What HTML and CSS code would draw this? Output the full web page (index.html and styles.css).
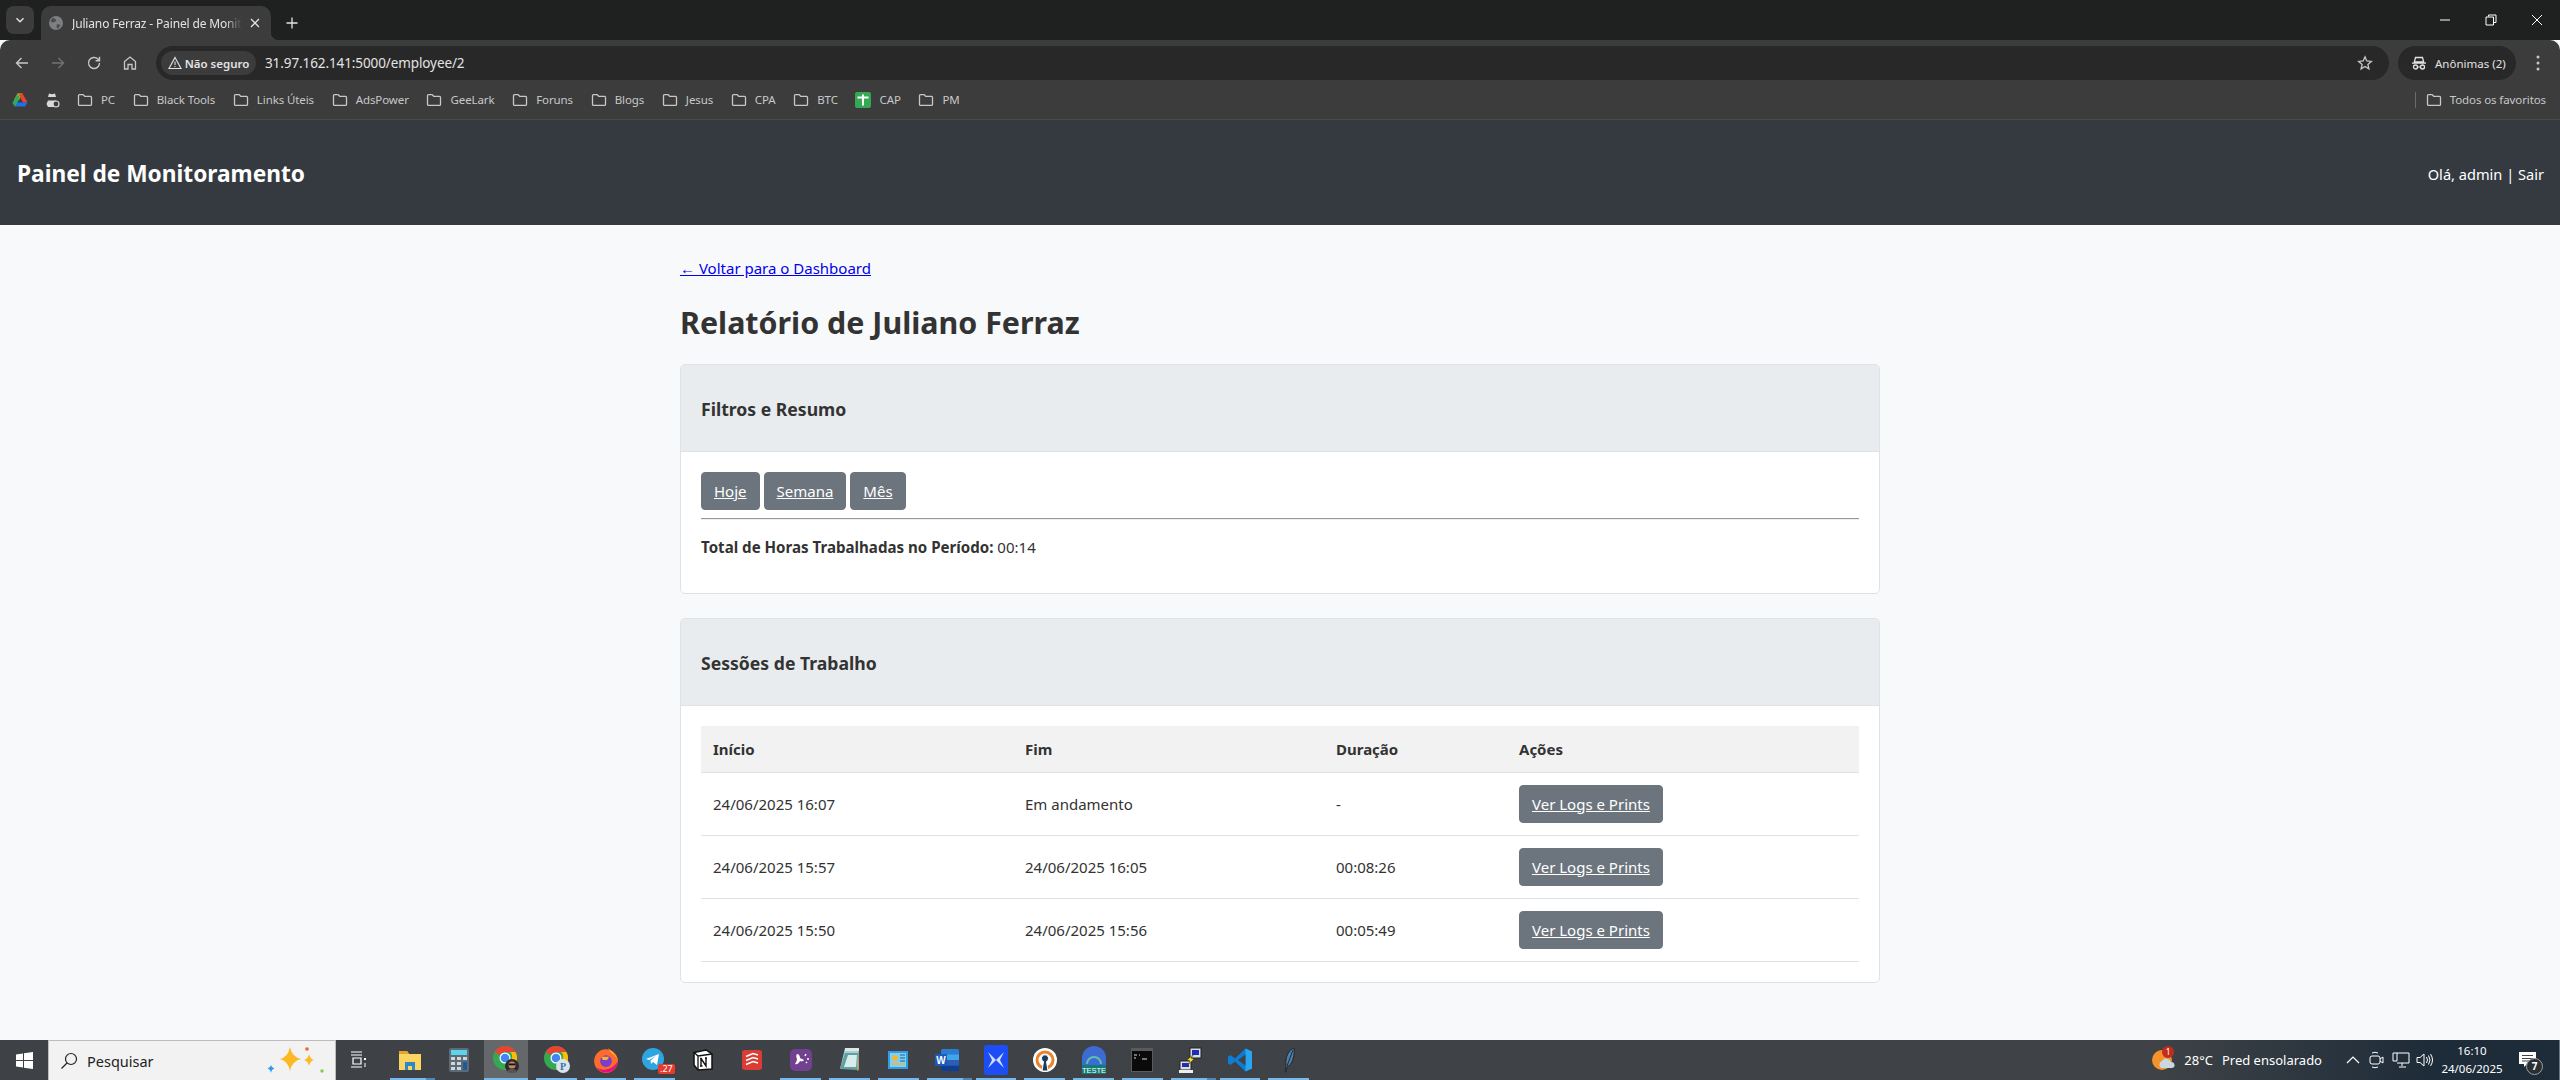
FILE: index.html
```html
<!doctype html>
<html lang="pt-BR">
  <head>
    <meta charset="utf-8" />
    <title>Juliano Ferraz - Painel de Monitoramento</title>
    <link rel="stylesheet" href="styles.css">
  </head>
  <body>
    <svg class="defs" width="0" height="0">
      <symbol id="folder" viewBox="0 0 16 16">
        <path d="M1.500 3.600c0-.6.4-1 1-1h3.600l1.600 1.700h5.800c.6 0 1 .4 1 1v7.100c0 .6-.4 1-1 1H2.500c-.6 0-1-.4-1-1z" fill="none" stroke="#c7c7c7" stroke-width="1.300"/>
      </symbol>
      <symbol id="chrome-logo" viewBox="0 0 24 24">
        <circle cx="12" cy="12" r="12" fill="#34a853"/>
        <path d="M12 0a12 12 0 0 1 10.400 6H12a6 6 0 0 0-5.200 3L1.600 6A12 12 0 0 1 12 0z" fill="#ea4335"/>
        <path d="M22.400 6A12 12 0 0 1 12 24l5.200-9a6 6 0 0 0 0-9z" fill="#fbbc04"/>
        <circle cx="12" cy="12" r="5.500" fill="#fff"/>
        <circle cx="12" cy="12" r="4.300" fill="#4285f4"/>
      </symbol>
    </svg>

    <!-- browser chrome -->
    <div class="tabstrip">
      <button class="tab-list"><svg width="10" height="10" viewBox="0 0 10 10"><path d="M1.500 3.200 5 6.700l3.500-3.500" fill="none" stroke="#e3e3e3" stroke-width="1.400"/></svg></button>
      <div class="tab">
        <svg width="16" height="16" viewBox="0 0 16 16"><circle cx="8" cy="8" r="7" fill="#7d7f82"/><path d="M5 2.500 8.500 5 7 7 4 7.500 2.500 6M9 9l3.500 1L10 14 8.500 12z" fill="#4b4d50"/></svg>
        <span class="tab-title">Juliano Ferraz - Painel de Monit</span>
        <svg class="tab-close" width="10" height="10" viewBox="0 0 10 10"><path d="M1 1l8 8M9 1 1 9" stroke="#e3e3e3" stroke-width="1.300"/></svg>
      </div>
      <svg class="new-tab" width="12" height="12" viewBox="0 0 12 12"><path d="M6 .5v11M.5 6h11" stroke="#e3e3e3" stroke-width="1.300"/></svg>
      <div class="win-controls">
        <svg width="12" height="12" viewBox="0 0 12 12"><path d="M1 6h10" stroke="#fff" stroke-width="1"/></svg>
        <svg width="12" height="12" viewBox="0 0 12 12"><path d="M3.500 2.500V1H11v7.500H9M1 3h7.500v8H1z" fill="none" stroke="#fff" stroke-width="1"/></svg>
        <svg width="12" height="12" viewBox="0 0 12 12"><path d="M1 1l10 10M11 1 1 11" stroke="#fff" stroke-width="1"/></svg>
      </div>
    </div>

    <div class="toolbar">
      <div class="nav-btns">
        <svg width="16" height="16" viewBox="0 0 16 16"><path d="M14 8H2.500M7.500 3 2.500 8l5 5" fill="none" stroke="#c7c7c7" stroke-width="1.400"/></svg>
        <svg width="16" height="16" viewBox="0 0 16 16"><path d="M2 8h11.500M8.500 3l5 5-5 5" fill="none" stroke="#737373" stroke-width="1.400"/></svg>
        <svg width="16" height="16" viewBox="0 0 16 16"><path d="M13.500 8a5.500 5.500 0 1 1-1.600-3.900L13.500 5.700M13.500 1.800v3.900H9.600" fill="none" stroke="#c7c7c7" stroke-width="1.400"/></svg>
        <svg width="16" height="16" viewBox="0 0 16 16"><path d="M2.500 14V6.500L8 2l5.500 4.500V14H10V9.500H6V14z" fill="none" stroke="#c7c7c7" stroke-width="1.300"/></svg>
      </div>
      <div class="omnibox">
        <span class="chip">
          <svg width="14" height="14" viewBox="0 0 14 14"><path d="M7 1.500 13 12.500H1zM7 5.500V9M7 10v1" fill="none" stroke="#e3e3e3" stroke-width="1.100"/></svg>
          Não seguro
        </span>
        <span class="url">31.97.162.141:5000/employee/2</span>
        <svg class="star" width="16" height="16" viewBox="0 0 16 16"><path d="M8 1.800 9.800 6l4.500.4-3.400 3 1 4.400L8 11.500l-3.900 2.300 1-4.400-3.400-3L6.200 6z" fill="none" stroke="#c7c7c7" stroke-width="1.300"/></svg>
      </div>
      <div class="profile">
        <svg width="16" height="16" viewBox="0 0 16 16"><path d="M4.500 2.500h7L12.700 7H3.300zM1 8.200h14" fill="none" stroke="#e3e3e3" stroke-width="1.300"/><circle cx="4.500" cy="12" r="2" fill="none" stroke="#e3e3e3" stroke-width="1.300"/><circle cx="11.500" cy="12" r="2" fill="none" stroke="#e3e3e3" stroke-width="1.300"/><path d="M6.500 12h3" stroke="#e3e3e3"/></svg>
        Anônimas (2)
      </div>
      <svg class="menu-dots" width="4" height="16" viewBox="0 0 4 16"><circle cx="2" cy="2" r="1.500" fill="#c7c7c7"/><circle cx="2" cy="8" r="1.500" fill="#c7c7c7"/><circle cx="2" cy="14" r="1.500" fill="#c7c7c7"/></svg>
    </div>

    <div class="bookmarks">
      <svg class="bm-icon" width="16" height="16" viewBox="0 0 16 16"><path d="M5.500 1.500h5L7 8H2z" fill="#fbbc04"/><path d="M10.500 1.500 15.500 10.500H11L6.500 2.500z" fill="#ea4335"/><path d="M.5 11 3 14.500h10l2.500-4H3.300z" fill="#1a73e8"/><path d="M5.500 1.500 .5 11 3 14.500 8 6z" fill="#34a853"/></svg>
      <svg class="bm-icon bm-icon-ext" width="16" height="16" viewBox="0 0 16 16"><path d="M4 5l1-3.500 3 .8 3-.8L12 5zM2.500 5.500h11M4 8.500h8l1 3-2 3.500H4l-1.500-3z" fill="#d8d8d8"/><circle cx="12" cy="12" r="3" fill="#3c3c3c" stroke="#d8d8d8" stroke-width="1.200"/></svg>
      <a class="bm"><svg width="16" height="16"><use href="#folder"/></svg>PC</a>
      <a class="bm"><svg width="16" height="16"><use href="#folder"/></svg>Black Tools</a>
      <a class="bm"><svg width="16" height="16"><use href="#folder"/></svg>Links Úteis</a>
      <a class="bm"><svg width="16" height="16"><use href="#folder"/></svg>AdsPower</a>
      <a class="bm"><svg width="16" height="16"><use href="#folder"/></svg>GeeLark</a>
      <a class="bm"><svg width="16" height="16"><use href="#folder"/></svg>Foruns</a>
      <a class="bm"><svg width="16" height="16"><use href="#folder"/></svg>Blogs</a>
      <a class="bm"><svg width="16" height="16"><use href="#folder"/></svg>Jesus</a>
      <a class="bm"><svg width="16" height="16"><use href="#folder"/></svg>CPA</a>
      <a class="bm"><svg width="16" height="16"><use href="#folder"/></svg>BTC</a>
      <a class="bm"><svg width="16" height="16" viewBox="0 0 16 16"><rect width="16" height="16" rx="2" fill="#34a853"/><path d="M2.500 5.500h11M8 2.500v11" stroke="#fff" stroke-width="2"/></svg>CAP</a>
      <a class="bm"><svg width="16" height="16"><use href="#folder"/></svg>PM</a>
      <span class="bm-sep"></span>
      <a class="bm bm-all"><svg width="16" height="16"><use href="#folder"/></svg>Todos os favoritos</a>
    </div>

    <!-- page -->
    <header class="site-header">
      <h1>Painel de Monitoramento</h1>
      <div class="user-info">Olá, admin | <a href="#">Sair</a></div>
    </header>

    <main class="container">
      <a class="back-link" href="#">← Voltar para o Dashboard</a>
      <h2 class="page-title">Relatório de Juliano Ferraz</h2>

      <section class="card">
        <div class="card-header"><h3>Filtros e Resumo</h3></div>
        <div class="card-body">
          <div class="filters">
            <a class="btn" href="#">Hoje</a>
            <a class="btn" href="#">Semana</a>
            <a class="btn" href="#">Mês</a>
          </div>
          <hr>
          <p class="total"><strong>Total de Horas Trabalhadas no Período:</strong> 00:14</p>
        </div>
      </section>

      <section class="card">
        <div class="card-header"><h3>Sessões de Trabalho</h3></div>
        <div class="card-body">
          <table>
            <thead>
              <tr><th class="col-start">Início</th><th class="col-end">Fim</th><th class="col-dur">Duração</th><th>Ações</th></tr>
            </thead>
            <tbody>
              <tr><td>24/06/2025 16:07</td><td>Em andamento</td><td>-</td><td><a class="btn" href="#">Ver Logs e Prints</a></td></tr>
              <tr><td>24/06/2025 15:57</td><td>24/06/2025 16:05</td><td>00:08:26</td><td><a class="btn" href="#">Ver Logs e Prints</a></td></tr>
              <tr><td>24/06/2025 15:50</td><td>24/06/2025 15:56</td><td>00:05:49</td><td><a class="btn" href="#">Ver Logs e Prints</a></td></tr>
            </tbody>
          </table>
        </div>
      </section>
    </main>

    <!-- windows taskbar -->
    <footer class="taskbar">
      <div class="start">
        <svg width="17" height="17" viewBox="0 0 17 17"><path d="M0 2.400 7 1.400V8H0zM8 1.300 17 0v8H8zM0 9h7v6.600l-7-1zM8 9h9v8l-9-1.300z" fill="#fff"/></svg>
      </div>
      <div class="search">
        <svg width="18" height="18" viewBox="0 0 18 18"><circle cx="11" cy="7" r="5.500" fill="none" stroke="#222" stroke-width="1.200"/><path d="M7 11 1.500 16.500" stroke="#222" stroke-width="1.300"/></svg>
        <span>Pesquisar</span>
        <svg class="sparkles" width="60" height="32" viewBox="0 0 60 32"><path d="M24 2q2 10 11 12-9 2-11 12-2-10-10-12 8-2 10-12z" fill="#fbb923"/><path d="M43 9q1 5 5 6-4 1-5 6-1-5-5-6 4-1 5-6z" fill="#fbb923"/><path d="M5 20q.7 3 3.500 3.500Q5.700 24.200 5 28q-.7-3.800-3.500-4.500Q4.300 23 5 20z" fill="#2b9bf0"/><circle cx="41" cy="4" r="1.800" fill="#f2622e"/><circle cx="56" cy="26" r="1.700" fill="#8cc84b"/></svg>
      </div>
      <div class="task-view">
        <svg width="17" height="18" viewBox="0 0 17 18"><path d="M1 1h11M1 4h11M3 7h8v6H3zM1 16h11" fill="none" stroke="#fff" stroke-width="1.200"/><path d="M14 7h2v2h-2zM14.500 12h1v4h-1z" fill="#fff"/></svg>
      </div>

      <div class="task-icons">
        <div class="task open stacked">
          <svg width="24" height="24" viewBox="0 0 24 24"><path d="M1 3h8l2 3h12v16H1z" fill="#fcd462"/><path d="M1 3h8l2 3H1z" fill="#e2a532"/><path d="M7 14h10v8h-3v-4h-4v4H7z" fill="#2d88c8"/></svg>
        </div>
        <div class="task">
          <svg width="20" height="24" viewBox="0 0 20 24"><rect width="20" height="24" rx="2" fill="#5d6b76"/><rect x="2" y="2" width="16" height="5" fill="#5fd3ee"/><path d="M2 9h4v3H2zM8 9h4v3H8zM2 14h4v3H2zM8 14h4v3H8zM2 19h4v3H2zM8 19h4v3H8z" fill="#cfd6da"/><path d="M14 9h4v3h-4z" fill="#cfd6da"/><rect x="14" y="14" width="4" height="8" fill="#1f5a97"/></svg>
        </div>
        <div class="task active">
          <svg class="chrome-icon" width="28" height="28" viewBox="0 0 28 28"><use href="#chrome-logo" width="24" height="24"/><circle cx="19" cy="20" r="7" fill="#2f2a28"/><circle cx="19" cy="19" r="3.600" fill="#b98a6f"/><rect x="15.500" y="17.500" width="7" height="1.800" fill="#111"/><path d="M14 25q5-5 10 0l-2 2h-6z" fill="#57534f"/></svg>
        </div>
        <div class="task open">
          <svg class="chrome-icon" width="28" height="28" viewBox="0 0 28 28"><use href="#chrome-logo" width="24" height="24"/><circle cx="19" cy="20" r="7" fill="#d9e3ec"/><text x="19" y="24" class="chrome-p">P</text></svg>
        </div>
        <div class="task open">
          <svg width="26" height="28" viewBox="0 0 24 26"><circle cx="12" cy="14" r="11" fill="#ff6b2c"/><path d="M14 1c1 4 8 6 9 13 .5-3-1-2-2-4-2-3-6-4-7-9z" fill="#ffcf30"/><path d="M23 14A11 11 0 0 1 3 20c6 4 16 2 20-6z" fill="#e3127a"/><circle cx="12" cy="14" r="5.500" fill="#7a3ec8"/><path d="M8 10h7l-2 3H9z" fill="#ffb22c"/></svg>
        </div>
        <div class="task open">
          <svg width="24" height="24" viewBox="0 0 24 24"><circle cx="11" cy="11" r="11" fill="#2ca5e0"/><path d="M4 11 17 6l-2 11-4-3-2 2-.5-3.500L14 8l-7 4z" fill="#fff"/></svg>
          <span class="count-badge">.27</span>
        </div>
        <div class="task">
          <svg width="20" height="22" viewBox="0 0 20 22"><path d="M1 3.500 13 1l6 4v15l-14 1-4-5z" fill="#fff" stroke="#111" stroke-width="1.500"/><path d="M1 3.500 5 7l14-2M5 7v14" fill="none" stroke="#111" stroke-width="1.300"/><path d="M8 17V9.500H7M8 9.500l5 7.500V9M12 9h2M7 17h2.500" fill="none" stroke="#111" stroke-width="1.400"/></svg>
        </div>
        <div class="task">
          <svg width="20" height="20" viewBox="0 0 20 20"><rect width="20" height="20" rx="3" fill="#d93d33"/><path d="M4 6.500l7-3 5 1.500M4 10.500l7-3 5 1.500M4 14.500l7-3 5 1.500" fill="none" stroke="#fff" stroke-width="1.600"/></svg>
        </div>
        <div class="task open">
          <svg width="22" height="22" viewBox="0 0 22 22"><rect width="22" height="22" rx="5" fill="#72418f"/><path d="M7 5c2 0 3 2 3 4 1 1 3 1 4 2-1 2-3 1-4 1-1 2-3 4-5 3 1-2 2-3 2-5-1-2-1-4 0-5z" fill="#fff"/><path d="M15 7l1-2M17 10h2M16 13l1 1" stroke="#fff" stroke-width="1.500"/></svg>
        </div>
        <div class="task open">
          <svg width="22" height="26" viewBox="0 0 22 26"><path d="M6 1h14l-1 21-14-1-4 1z" fill="#a9cfd0"/><path d="M6 1h14v3H6z" fill="#dfe6e6"/><path d="M1 22 6 6h13L18 23z" fill="#5fa0a6"/><path d="M20 4v19l-2 1z" fill="#bb9a5b"/><path d="M5 20 9 8h9l-1 12z" fill="#d8ecec"/></svg>
        </div>
        <div class="task open">
          <svg width="20" height="18" viewBox="0 0 20 18"><rect width="20" height="18" fill="#2f9ee6"/><rect x="2" y="2" width="16" height="14" fill="#7fd0f7"/><circle cx="7" cy="7" r="3" fill="#f2b632"/><path d="M12 4h5M12 7h5M12 10h5" stroke="#18618f"/><path d="M3 13h14" stroke="#f2b632" stroke-width="1.500"/></svg>
        </div>
        <div class="task open stacked">
          <svg width="24" height="22" viewBox="0 0 24 22"><rect x="6" width="18" height="22" rx="1.500" fill="#2b7cd3"/><path d="M6 5.500h18V11H6z" fill="#41a5ee"/><path d="M6 11h18v5.500H6z" fill="#2b5fb0"/><path d="M6 16.500h18V22H6z" fill="#103f91"/><rect y="5" width="12" height="12" rx="1" fill="#185abd"/><text x="6" y="15" class="word-w">W</text></svg>
        </div>
        <div class="task open">
          <svg width="24" height="30" viewBox="0 0 24 30"><rect width="24" height="30" rx="2" fill="#1c4df5"/><path d="M4 7l8 8-8 8 4-8zM20 7l-8 8 8 8-4-8z" fill="#cfe0ff"/></svg>
        </div>
        <div class="task open">
          <svg width="24" height="24" viewBox="0 0 24 24"><circle cx="12" cy="12" r="12" fill="#fff"/><circle cx="12" cy="12" r="8" fill="none" stroke="#e8832e" stroke-width="3"/><path d="M9 23l1.500-9.500a3.500 3.500 0 1 1 3 0L15 23z" fill="#1b3a5c" stroke="#fff"/></svg>
        </div>
        <div class="task open">
          <svg width="24" height="28" viewBox="0 0 24 28"><path d="M0 21v-9a12 12 0 0 1 24 0v9z" fill="#3d6bd0"/><path d="M5 18a7 7 0 0 1 14 0" fill="none" stroke="#5ec0b0" stroke-width="2"/><rect y="19" width="24" height="9" rx="1" fill="#137b76"/><text x="12" y="26.500" class="teste-label">TESTE</text></svg>
        </div>
        <div class="task open">
          <svg width="22" height="24" viewBox="0 0 22 24"><rect width="22" height="24" fill="#5b5b5b"/><rect x="1" y="3" width="20" height="20" fill="#0a0a0a"/><path d="M3 7h3M3 10h2M8 7h1M11 11h5" stroke="#ddd" stroke-width="1.200"/></svg>
        </div>
        <div class="task open stacked">
          <svg width="24" height="26" viewBox="0 0 24 26"><rect x="11" y="1" width="11" height="10" fill="#ddd" stroke="#222"/><rect x="13" y="3" width="7" height="5" fill="#1a2fbf"/><rect x="1" y="14" width="11" height="9" fill="#ddd" stroke="#222"/><rect x="3" y="16" width="7" height="4" fill="#1a2fbf"/><path d="M15 7 8 13l3 1-3 5 7-7-3-1z" fill="#f6e024" stroke="#222" stroke-width=".5"/><rect y="23" width="14" height="3" fill="#eee"/></svg>
        </div>
        <div class="task open">
          <svg width="24" height="24" viewBox="0 0 24 24"><path d="M17.500.5 24 3.500v17l-6.500 3L7 13.500 2.500 17 0 15.500v-7L2.500 7 7 10.500z" fill="#0c7cd5"/><path d="M17.500.5 24 3.500v17l-6.500 3z" fill="#28a4f0"/><path d="M17.500 6.500 10 12l7.500 5.500z" fill="#3f4347"/></svg>
        </div>
        <div class="task open">
          <svg width="14" height="26" viewBox="0 0 14 26"><path d="M12 1C7 3 3 9 4 19l-1 6h1l1-5C10 18 13 9 12 1z" fill="#4d7fa8" stroke="#1b1b1b" stroke-width=".8"/><path d="M11 3 5 19" stroke="#1b2a3a"/></svg>
        </div>
      </div>

      <div class="tray">
        <div class="weather">
          <svg width="24" height="24" viewBox="0 0 24 24"><circle cx="11" cy="12" r="10" fill="#f5932b"/><path d="M10 20a4 4 0 0 1 1-7 5 5 0 0 1 9 1 3 3 0 0 1 1 6z" fill="#c9d6e4"/></svg>
          <span class="weather-badge">1</span>
          <span class="temp">28°C</span>
          <span class="forecast">Pred ensolarado</span>
        </div>
        <div class="tray-icon"><svg width="14" height="8" viewBox="0 0 14 8"><path d="M1 7l6-6 6 6" fill="none" stroke="#fff" stroke-width="1.200"/></svg></div>
        <div class="tray-icon"><svg width="18" height="18" viewBox="0 0 18 18"><rect x="2" y="5" width="10" height="8" rx="2" fill="none" stroke="#fff"/><path d="M12 8l3-2v6l-3-2M4 2q3-1.500 6 0M4 16q3 1.500 6 0" fill="none" stroke="#fff"/></svg></div>
        <div class="tray-icon"><svg width="18" height="16" viewBox="0 0 18 16"><path d="M5 1h12v10H5M1 1h4v8H1zM10 11v3M7 15h7" fill="none" stroke="#fff"/></svg></div>
        <div class="tray-icon"><svg width="18" height="16" viewBox="0 0 18 16"><path d="M1 5.500h3L8 2v12l-4-3.500H1zM10.500 5q2 3 0 6M12.500 3.500q3 4.500 0 9M14.500 2q4 6 0 12" fill="none" stroke="#fff"/></svg></div>
        <div class="clock"><span>16:10</span><span>24/06/2025</span></div>
        <div class="notif">
          <svg width="17" height="16" viewBox="0 0 17 16"><path d="M0 0h17v12H8l-3 3v-3H0z" fill="#fff"/><path d="M3 3.500h11M3 6.500h11M3 9h7" stroke="#3a4550"/></svg>
          <span class="notif-count">7</span>
        </div>
      </div>
    </footer>
  </body>
</html>
```

FILE: styles.css
```css
/* body tags */
* { box-sizing: border-box; }
body {
    margin: 0;
    height: 1080px;
    overflow: hidden;
    background: #f8f9fa;
    color: #333;
    font-family: "Noto Sans", "Open Sans", sans-serif;
    font-size: 15px;
    display: flex;
    flex-direction: column;
}
.defs { position: absolute; }

/* browser tab strip */
.tabstrip {
    height: 40px;
    background: #1f2020;
    display: flex;
    align-items: flex-end;
    color: #e3e3e3;
    font-size: 12px;
}
.tab-list {
    width: 28px;
    height: 28px;
    margin: 0 7px 6px 6px;
    border: 0;
    border-radius: 8px;
    background: #3c3c3c;
    display: flex;
    align-items: center;
    justify-content: center;
    padding: 0;
}
.tab {
    width: 230px;
    height: 34px;
    padding: 0 11px 0 7px;
    background: #3c3c3c;
    border-radius: 10px 10px 0 0;
    display: flex;
    align-items: center;
    position: relative;
}
.tab::after {
    content: "";
    position: absolute;
    right: -8px;
    bottom: 0;
    width: 8px;
    height: 8px;
    background: radial-gradient(circle at 100% 0, #1f2020 8px, #3c3c3c 8.500px);
}
.tab-title {
    margin-left: 8px;
    white-space: nowrap;
    letter-spacing: -.15px;
    -webkit-mask-image: linear-gradient(90deg, #000 90%, transparent);
    mask-image: linear-gradient(90deg, #000 90%, transparent);
}
.tab-close { margin-left: auto; }
.new-tab { margin: 0 0 11px 15px; }
.win-controls {
    margin-left: auto;
    height: 40px;
    display: flex;
    align-items: center;
    gap: 34px;
    padding-right: 17px;
}

/* browser toolbar */
.toolbar {
    height: 40px;
    background: #3c3c3c;
    border-radius: 10px 10px 0 0;
    display: flex;
    align-items: center;
    color: #e3e3e3;
    font-size: 12px;
    padding-top: 6px;
}
.nav-btns {
    display: flex;
    gap: 20px;
    padding-left: 14px;
    width: 156px;
}
.omnibox {
    width: 2233px;
    height: 34px;
    background: #282828;
    border-radius: 17px;
    display: flex;
    align-items: center;
    padding: 0 16px 0 5px;
}
.chip {
    height: 24px;
    width: 95px;
    border-radius: 12px;
    background: #3c3c3c;
    display: flex;
    align-items: center;
    justify-content: center;
    gap: 3px;
    font-weight: 600;
    font-size: 11.500px;
    white-space: nowrap;
}
.url {
    margin-left: 9px;
    font-size: 13.500px;
    letter-spacing: -.1px;
}
.star { margin-left: auto; }
.profile {
    margin-left: 9px;
    width: 118px;
    height: 34px;
    border-radius: 17px;
    background: #282828;
    display: flex;
    align-items: center;
    gap: 8px;
    padding-left: 13px;
    font-size: 11.500px;
    white-space: nowrap;
}
.menu-dots { margin-left: 20px; }

/* bookmarks bar */
.bookmarks {
    height: 40px;
    background: #3c3c3c;
    border-bottom: 1px solid #4a4a4a;
    display: flex;
    align-items: center;
    color: #c8c8c8;
    font-size: 11.500px;
    letter-spacing: -.1px;
    padding-left: 12px;
}
.bm-icon { margin-right: 16px; }
.bm-icon-ext { margin-right: 17px; }
.bm {
    display: flex;
    align-items: center;
    gap: 8px;
    margin-right: 17.700px;
    white-space: nowrap;
}
.bm-sep {
    margin-left: auto;
    width: 1px;
    height: 16px;
    background: #6a6a6a;
}
.bm-all {
    margin-left: 10px;
    margin-right: 14px;
}

/* page */
.site-header {
    height: 105px;
    background: #343a40;
    color: #fff;
    display: flex;
    align-items: center;
    justify-content: space-between;
    padding: 2px 16px 0 17px;
    flex: none;
}
.site-header h1 {
    margin: 0;
    font-size: 22.700px;
    font-weight: 700;
}
.user-info { font-size: 14.600px; }
.user-info a { color: #fff; text-decoration: none; }
.container {
    width: 1200px;
    margin: 0 auto;
    flex: 1;
    padding-top: 31px;
}
.back-link {
    display: block;
    color: #0000ee;
    line-height: 24px;
}
.page-title {
    margin: 22px 0 20px;
    font-size: 30.400px;
    line-height: 42px;
    font-weight: 700;
}
.card {
    background: #fff;
    border: 1px solid #dee2e6;
    border-radius: 5px;
    margin-bottom: 24px;
    overflow: hidden;
}
.card-header {
    height: 87px;
    background: #e9ecef;
    border-bottom: 1px solid #dee2e6;
    padding: 1px 20px 0;
    display: flex;
    align-items: center;
}
.card-header h3 {
    margin: 0;
    font-size: 17.600px;
    font-weight: 700;
}
.card-body { padding: 20px; }
.filters {
    display: flex;
    gap: 4px;
}
.btn {
    display: inline-block;
    height: 38px;
    line-height: 36px;
    padding: 0 12px;
    border: 1px solid #6c757d;
    border-radius: 4px;
    background: #6c757d;
    color: #fff;
    white-space: nowrap;
}
hr {
    margin: 8px 0 15px;
    border: 0;
    border-top: 1px solid #9a9a9a;
    border-bottom: 1px solid #eee;
}
.total {
    margin: 0 0 14px;
    line-height: 24px;
}
.total strong { font-size: 15.100px; }
table {
    width: 100%;
    border-collapse: collapse;
    table-layout: fixed;
}
th {
    height: 46px;
    padding: 0 12px;
    background: #f2f2f2;
    border-bottom: 1px solid #dee2e6;
    text-align: left;
}
td {
    height: 63px;
    padding: 0 12px;
    border-bottom: 1px solid #dee2e6;
}
.col-start { width: 312px; }
.col-end { width: 311px; }
.col-dur { width: 183px; }

/* windows taskbar */
.taskbar {
    height: 40px;
    flex: none;
    background: linear-gradient(90deg, #3e4246 0, #3f4347 84%, #1e2c39 95%, #1e2c39 100%);
    display: flex;
    color: #fff;
}
.start {
    width: 48px;
    display: flex;
    align-items: center;
    justify-content: center;
}
.search {
    width: 288px;
    background: #f2f2f2;
    border: 1px solid #bdbdbd;
    border-bottom: 0;
    display: flex;
    align-items: center;
    color: #222;
    font-size: 14.500px;
    padding-left: 11px;
    gap: 9px;
}
.sparkles { margin-left: auto; margin-right: 9px; }
.task-view {
    width: 50px;
    padding-right: 5px;
    display: flex;
    align-items: center;
    justify-content: center;
}
.task-icons {
    display: grid;
    grid-template-columns: repeat(19, 48.800px);
}
.task {
    position: relative;
    display: flex;
    align-items: center;
    justify-content: center;
    height: 40px;
}
.open::after {
    content: "";
    position: absolute;
    left: 4px;
    right: 4px;
    bottom: 0;
    height: 2px;
    background: #76b9ed;
}
.stacked::after { right: 0; box-shadow: inset -9px 0 0 #4f87b5; }
.active {
    background: #65686b;
    margin-right: 4px;
}
.active::after {
    content: "";
    position: absolute;
    left: 0;
    right: 0;
    bottom: 0;
    height: 2px;
    background: #76b9ed;
}
.chrome-icon { margin-left: 3px; }
.chrome-p {
    font-size: 10px;
    font-weight: 700;
    fill: #3470a8;
    text-anchor: middle;
    font-family: "Liberation Serif", serif;
}
.word-w {
    font-size: 10px;
    font-weight: 700;
    fill: #fff;
    text-anchor: middle;
    font-family: "Liberation Sans", sans-serif;
}
.teste-label {
    font-size: 7.500px;
    fill: #fff;
    text-anchor: middle;
    font-family: "Liberation Sans", sans-serif;
}
.count-badge {
    position: absolute;
    left: 28px;
    bottom: 6px;
    background: #e8392e;
    border-radius: 2px;
    font-size: 9px;
    line-height: 10px;
    padding: 0 2px;
}
.tray {
    margin-left: auto;
    display: flex;
    align-items: center;
    font-size: 13px;
    padding-right: 4px;
    border-right: 1px solid #6d7780;
    height: 40px;
}
.weather {
    display: flex;
    align-items: center;
    position: relative;
    margin-right: 19px;
}
.weather-badge {
    position: absolute;
    left: 11px;
    top: -2px;
    width: 12px;
    height: 12px;
    border-radius: 50%;
    background: #c42b1c;
    font-size: 8.500px;
    line-height: 12px;
    text-align: center;
}
.temp { margin-left: 9px; }
.forecast { margin-left: 9px; }
.tray-icon {
    width: 24px;
    display: flex;
    justify-content: center;
}
.clock {
    width: 70px;
    display: flex;
    flex-direction: column;
    align-items: center;
    font-size: 11.500px;
    line-height: 18px;
}
.notif {
    position: relative;
    width: 48px;
    padding-left: 12px;
    display: flex;
    align-items: center;
    height: 26px;
}
.notif-count {
    position: absolute;
    left: 19px;
    top: 11px;
    width: 17px;
    height: 17px;
    border: 1px solid #9aa0a5;
    border-radius: 50%;
    background: #2a2f33;
    font-size: 10px;
    font-weight: 700;
    line-height: 15px;
    text-align: center;
}
```
